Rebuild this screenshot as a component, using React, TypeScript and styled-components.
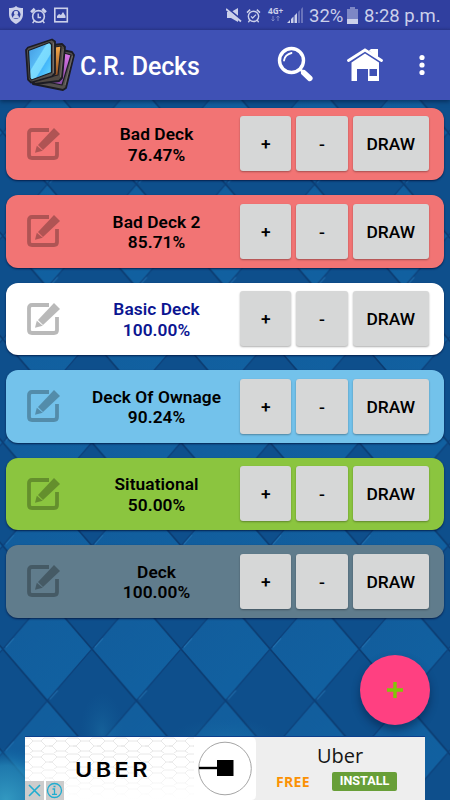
import React from "react";
import styled, { createGlobalStyle } from "styled-components";

const GlobalStyle = createGlobalStyle`
  * { box-sizing: border-box; }
  html, body, #root { margin: 0; width: 450px; height: 800px; overflow: hidden; }
  body { font-family: Roboto, "Liberation Sans", sans-serif; background: #0f5796; }
  button { font-family: inherit; border: 0; padding: 0; margin: 0; }
  svg { display: block; flex: none; }
`;

const Screen = styled.div`
  position: relative;
  width: 450px;
  height: 800px;
  overflow: hidden;
  display: flex;
  flex-direction: column;
`;

const Backdrop = styled.svg`
  position: absolute;
  inset: 0;
  z-index: -1;
`;

const StatusBar = styled.header`
  height: 30px;
  flex: none;
  background: linear-gradient(#303f9f 27px, #2b388f);
  color: #cbd0ea;
  display: flex;
  align-items: center;
  padding: 0 10px 0 8px;
`;

const StatusGroup = styled.div<{ $gap: number }>`
  display: flex;
  align-items: center;
  gap: ${(p) => p.$gap}px;
`;

const StatusText = styled.span<{ $width: number }>`
  width: ${(p) => p.$width}px;
  font-size: 18.5px;
  line-height: 30px;
  padding-top: 1px;
  white-space: nowrap;
`;

const Spacer = styled.div`
  flex: 1;
`;

const AppBar = styled.nav`
  height: 70px;
  flex: none;
  background: #3f51b5;
  display: flex;
  align-items: center;
  padding-left: 24px;
  box-shadow: 0 2px 4px rgba(0, 20, 50, 0.5);
`;

const Title = styled.h1`
  margin: 3px 0 0 3px;
  width: 197px;
  color: #fff;
  font-size: 25px;
  font-weight: 500;
  letter-spacing: -0.1px;
  line-height: 34px;
  white-space: nowrap;
`;

const IconButton = styled.button<{ $left?: number }>`
  background: transparent;
  margin-left: ${(p) => p.$left ?? 0}px;
`;

const DeckList = styled.main`
  display: flex;
  flex-direction: column;
  gap: 15px;
  padding: 7.5px 6.5px 0 6px;
`;

const DeckCard = styled.article<{ $color: string; $ink: string }>`
  height: 72.5px;
  border-radius: 12px;
  background: ${(p) => p.$color};
  color: ${(p) => p.$ink};
  box-shadow: 0 1px 2px rgba(0, 15, 55, 0.75);
  display: flex;
  align-items: center;
  padding: 0 14.5px 0 20px;
`;

const DeckInfo = styled.div`
  flex: 1;
  text-align: center;
  font-size: 17.3px;
  font-weight: 600;
  line-height: 20.5px;
  letter-spacing: 0.08px;
  padding: 2px 0 0 11px;
  white-space: nowrap;
`;

const Actions = styled.div`
  display: flex;
  gap: 5px;
`;

const ActionButton = styled.button<{ $wide?: boolean }>`
  width: ${(p) => (p.$wide ? 76.5 : 51.2)}px;
  height: 55px;
  border-radius: 3px;
  background: #d6d7d7;
  box-shadow: 0 1px 2px rgba(0, 0, 0, 0.32);
  color: #000;
  font-size: 17.4px;
  font-weight: 500;
  line-height: 55px;
  padding-top: 1px;
`;

const Fab = styled.button`
  position: absolute;
  left: 360px;
  top: 655px;
  width: 70px;
  height: 70px;
  border-radius: 50%;
  background: #ff4081;
  display: grid;
  place-items: center;
  box-shadow: 0 5px 9px rgba(0, 20, 50, 0.45);
`;

const AdBanner = styled.aside`
  width: 400px;
  height: 63px;
  margin: auto auto 0 25px;
  position: relative;
  flex: none;
  display: flex;
  overflow: hidden;
  background: #fff;
  box-shadow: 0 -1px 0 #0b3f8d;
`;

const AdArt = styled.div`
  position: relative;
  width: 232px;
  background: #fff;
  flex: none;
`;

const AdPattern = styled.svg`
  position: absolute;
  inset: 0;
`;

const Brand = styled.span`
  position: absolute;
  left: 50px;
  top: 21px;
  font-family: Inter, sans-serif;
  font-size: 19.5px;
  line-height: 24px;
  font-weight: 600;
  letter-spacing: 2.9px;
  transform: scaleX(1.2);
  transform-origin: left;
  color: #000;
`;

const AdControls = styled.div`
  position: absolute;
  left: 0;
  bottom: 0;
  display: flex;
  gap: 2px;
  background: #fff;
`;

const AdControl = styled.button`
  width: 18.5px;
  height: 19px;
  background: #ccc;
  display: grid;
  place-items: center;
`;

const AdCopy = styled.div`
  flex: 1;
  background: #eee;
  font-family: "Open Sans", sans-serif;
  display: flex;
  flex-direction: column;
`;

const AdTitle = styled.div`
  font-size: 20px;
  line-height: 26px;
  color: #151515;
  padding: 6px 0 0 60px;
`;

const AdFooter = styled.div`
  display: flex;
  align-items: center;
  padding: 3px 0 0 19px;
`;

const FreeLabel = styled.span`
  width: 56px;
  color: #fb9104;
  font-size: 14px;
  letter-spacing: 0.3px;
  line-height: 18px;
  font-weight: 700;
`;

const InstallButton = styled.button`
  width: 65px;
  height: 19px;
  border-radius: 2px;
  background: #689f38;
  color: #fff;
  font: 700 12.6px/17px Roboto, sans-serif;
  padding-bottom: 2px;
`;

function DiamondBackdrop() {
  return (
    <Backdrop width="450" height="800" viewBox="0 0 450 800">
      <defs>
        <linearGradient id="lightTile" x1="0" y1="0" x2="1" y2="1">
          <stop offset="0" stopColor="#125c9b" />
          <stop offset="1" stopColor="#1162a2" />
        </linearGradient>
        <pattern id="diamonds" width="89.1" height="103.3" patternUnits="userSpaceOnUse" patternTransform="translate(2.8 597.4)">
          <rect width="89.1" height="103.3" fill="#0e4f8c" />
          <path d="M44.55 0 89.1 51.65 44.55 103.3 0 51.65Z" fill="url(#lightTile)" />
          <path d="M44.55 0 89.1 51.65M0 51.65 44.55 103.3" stroke="#0b3b70" strokeWidth="1.7" />
          <path d="M44.55 0 0 51.65M44.55 103.3 89.1 51.65" stroke="#0c407a" strokeWidth="1.2" />
          <path d="M3 50 11 41M47 102 55 93" stroke="#2577b5" strokeWidth="1" opacity=".75" />
        </pattern>
        <radialGradient id="cornerGlow">
          <stop offset="0" stopColor="#39a6ca" stopOpacity=".85" />
          <stop offset=".65" stopColor="#268bbb" stopOpacity=".7" />
          <stop offset="1" stopColor="#116ba6" stopOpacity="0" />
        </radialGradient>
        <radialGradient id="softGlow">
          <stop offset="0" stopColor="#2584b4" stopOpacity=".32" />
          <stop offset="1" stopColor="#1469a1" stopOpacity="0" />
        </radialGradient>
      </defs>
      <rect width="450" height="800" fill="url(#diamonds)" />
      <ellipse cx="6" cy="800" rx="52" ry="53" fill="url(#cornerGlow)" />
      <ellipse cx="102" cy="732" rx="22" ry="40" fill="url(#softGlow)" />
      <ellipse cx="225" cy="742" rx="58" ry="24" fill="url(#softGlow)" />
    </Backdrop>
  );
}

function AlarmIcon({ width = 17, check = false }: { width?: number; check?: boolean }) {
  return (
    <svg width={width} height={width} viewBox="0 0 18 18" fill="none" stroke="currentColor">
      <circle cx="9" cy="10" r="6.2" strokeWidth="1.7" />
      <path d="M1.2 5.5 5 2M16.8 5.5 13 2" strokeWidth={check ? 1.8 : 3} />
      <path d={check ? "m6 10 2 2 4-4" : "M8.7 7v4.2h3"} strokeWidth="1.5" />
      <path d="m4.8 14.3-2 2.8M13.2 14.3l2 2.8" strokeWidth="1.6" />
    </svg>
  );
}

function StatusIconsLeft() {
  return (
    <StatusGroup $gap={6}>
      <svg width="16" height="18" viewBox="0 0 16 18">
        <path d="M8 0C6 2 3 2 1 2v6c0 5 3 8 7 10 4-2 7-5 7-10V2c-2 0-5 0-7-2Z" fill="currentColor" />
        <circle cx="8" cy="8.6" r="4.5" fill="#303f9f" />
        <circle cx="8" cy="6.9" r="2.2" fill="currentColor" />
        <path d="M5 12.2c0-2.6 1.2-3.4 3-3.4s3 .8 3 3.4Z" fill="currentColor" />
      </svg>
      <AlarmIcon />
      <svg width="16" height="16" viewBox="0 0 16 16">
        <rect x="1.8" y="1.3" width="12.5" height="13.5" fill="none" stroke="currentColor" strokeWidth="1.6" />
        <path d="M4 11V9l2-2 2 1 2-3 2.5 4v2Z" fill="currentColor" />
      </svg>
    </StatusGroup>
  );
}

const NetworkIcon = styled.svg`
  overflow: visible;
`;

function StatusIconsRight() {
  return (
    <StatusGroup $gap={4}>
      <svg width="16" height="16" viewBox="0 0 16 16" fill="currentColor">
        <path d="M1 5h4l7-4v14l-7-4H1Z" />
        <path d="m0 0 15 12.5" stroke="#303f9f" strokeWidth="1.8" />
        <path d="m0 2 15 12.5" stroke="currentColor" strokeWidth="1.8" />
      </svg>
      <AlarmIcon width={15} check />
      <NetworkIcon width="18" height="18" viewBox="0 0 18 18">
        <text x="3" y="8" fill="currentColor" fontFamily="Open Sans, sans-serif" fontSize="8.2" fontWeight="700">4G+</text>
        <path d="M8 15v-5M6.5 13.5 8 15l1.5-1.5M13 15v-5m-1.5 1.5L13 10l1.5 1.5" fill="none" stroke="#7d87c5" />
      </NetworkIcon>
      <svg width="17" height="17" viewBox="0 0 17 17">
        <path d="M0 16 3 13v3ZM4 12l2.5-2.5V16H4ZM7.5 8.5 10 6v10H7.5Z" fill="currentColor" />
        <path d="m11 5 2-2v13h-2ZM14 2l2-2v16h-2Z" fill="#6973bb" />
      </svg>
    </StatusGroup>
  );
}

const StatusClockRow = styled.div`
  display: flex;
  align-items: center;
  margin-left: 5px;
`;

const BatteryIcon = styled.svg`
  margin: 0 6px 0 3px;
`;

function CardsLogo() {
  return (
    <svg width="53" height="54" viewBox="0 0 53 54">
      <defs>
        <linearGradient id="blueCard" x2="1" y2="1">
          <stop stopColor="#4197df" /><stop offset=".4" stopColor="#56b8f4" />
          <stop offset=".43" stopColor="#7cdcff" /><stop offset=".62" stopColor="#78d9fd" />
          <stop offset=".65" stopColor="#43b6fa" /><stop offset="1" stopColor="#6bdfff" />
        </linearGradient>
        <linearGradient id="orangeCard" x2="0" y2="1"><stop stopColor="#f5aa4b" /><stop offset="1" stopColor="#8d4c22" /></linearGradient>
        <linearGradient id="violetCard" x2="0" y2="1"><stop stopColor="#dc77e8" /><stop offset="1" stopColor="#8349a3" /></linearGradient>
      </defs>
      <g stroke="#1c1c23" strokeWidth="1.8" strokeLinejoin="round">
        <path d="m38 12 10 2 2 3-8 33-3 2-30-6-2-4Z" fill="#54504f" />
        <path d="m40 15 7 2-9 30-15-3 15-6Z" fill="url(#violetCard)" strokeWidth="1.2" />
        <path d="m29 7 9-1 3 3-3 31-3 3-24 3-3-3Z" fill="#504943" />
        <path d="m31 9 6-1-3 29-9 2 5-3Z" fill="url(#orangeCard)" strokeWidth="1.2" />
        <path d="M4 9.5 28 1.5l3 2v32l-3 3-21 6-3-3L2 12Z" fill="#57534f" />
        <path d="m4.5 12.5 21-8 2 2v28L7.5 42l-1.5-2Z" fill="url(#blueCard)" strokeWidth="1.2" />
      </g>
      <path d="M29.5 5v30M39.3 11 36.5 39M48.5 18 41 47" stroke="#817a74" strokeWidth=".7" />
    </svg>
  );
}

function SearchIcon() {
  return (
    <svg width="38" height="38" viewBox="0 0 38 38" fill="none" stroke="#fff" strokeLinecap="round">
      <circle cx="14.5" cy="14.5" r="12" strokeWidth="3.4" />
      <path d="M7 14.5q1-6 7.5-7.5" strokeWidth="1.8" />
      <path d="m26.8 26.8 6 5.6" strokeWidth="5.6" />
      <path d="m23 23 3 3" strokeWidth="2.6" />
    </svg>
  );
}

function HomeIcon() {
  return (
    <svg width="36" height="34" viewBox="0 0 36 34">
      <path d="M22 2.5 24 1h7v10Z" fill="#fff" />
      <path d="M18 2 1.5 12.5M18 2l16.5 10.5" stroke="#fff" strokeWidth="2.8" strokeLinecap="round" />
      <path fillRule="evenodd" d="M18 5.5 4.5 14.5V33H10V21h11v12H32V14.5ZM22.5 21h7.5v7h-7.5Z" fill="#fff" />
    </svg>
  );
}

function EditIcon() {
  return (
    <svg width="36" height="34" viewBox="0 0 36 34">
      <g opacity=".27">
        <path d="M23 3H6Q3 3 3 6v22q0 3 3 3h22q3 0 3-3V15" fill="none" stroke="#000" strokeWidth="3.8" />
        <path d="m28 1 6 6-17 16-5-5Z" fill="#000" />
        <path d="m10.8 18.8 6 5-7.8 2Z" fill="#000" />
      </g>
    </svg>
  );
}

const decks = [
  { name: "Bad Deck", rate: "76.47%", color: "#f27474", ink: "#000" },
  { name: "Bad Deck 2", rate: "85.71%", color: "#f27474", ink: "#000" },
  { name: "Basic Deck", rate: "100.00%", color: "#fff", ink: "#0b1591" },
  { name: "Deck Of Ownage", rate: "90.24%", color: "#73c2eb", ink: "#000" },
  { name: "Situational", rate: "50.00%", color: "#8bc53f", ink: "#000" },
  { name: "Deck", rate: "100.00%", color: "#607c8c", ink: "#000" },
];

function Advertisement() {
  return (
    <AdBanner>
      <AdArt>
        <AdPattern width="232" height="63">
          <defs>
            <pattern id="adLines" width="24" height="16" patternUnits="userSpaceOnUse">
              <path d="M0 9h3l5-5h8l5 5h3M0 9h3l5 5h8l5-5M0 1h5l3 3M24 1h-5l-3 3M8 14l-3 2M16 14l3 2" fill="none" stroke="#e2e2e2" strokeWidth=".8" />
            </pattern>
            <linearGradient id="adFade" x2="0" y2="1">
              <stop offset=".3" stopColor="#fff" stopOpacity="0" /><stop offset="1" stopColor="#fff" />
            </linearGradient>
          </defs>
          <rect width="169" height="63" fill="url(#adLines)" />
          <rect width="169" height="63" fill="url(#adFade)" />
          <path d="M226 0h6v63h-6q5 0 5-5V6q0-6-5-6Z" fill="#eee" />
          <circle cx="200" cy="31.5" r="26.3" fill="#fff" stroke="#a5a5a5" />
          <path d="M174 31h20" stroke="#000" strokeWidth="2.4" />
          <path d="M192 23h16.5v16H192Z" />
        </AdPattern>
        <Brand>UBER</Brand>
        <AdControls>
          <AdControl><svg width="13" height="13" viewBox="0 0 13 13"><path d="m1 1 11 11M12 1 1 12" stroke="#20add0" strokeWidth="1.6" /></svg></AdControl>
          <AdControl>
            <svg width="17" height="17" viewBox="0 0 17 17" fill="none" stroke="#20add0" strokeWidth="1.3">
              <circle cx="8.5" cy="8.5" r="7" /><path d="M6.5 7h2v5M6 12.3h5M7.5 4.5h2" />
            </svg>
          </AdControl>
        </AdControls>
      </AdArt>
      <AdCopy>
        <AdTitle>Uber</AdTitle>
        <AdFooter><FreeLabel>FREE</FreeLabel><InstallButton>INSTALL</InstallButton></AdFooter>
      </AdCopy>
    </AdBanner>
  );
}

export default function App() {
  return (
    <Screen>
      <GlobalStyle />
      <DiamondBackdrop />
      <StatusBar>
        <StatusIconsLeft />
        <Spacer />
        <StatusIconsRight />
        <StatusClockRow>
          <StatusText $width={35}>32%</StatusText>
          <BatteryIcon width="11" height="17" viewBox="0 0 11 17">
            <path d="M3 0h5v2h3v15H0V2h3Z" fill="#7d87c5" />
            <path d="M0 12h11v5H0Z" fill="currentColor" />
          </BatteryIcon>
          <StatusText $width={76}>8:28 p.m.</StatusText>
        </StatusClockRow>
      </StatusBar>
      <AppBar>
        <CardsLogo />
        <Title>C.R. Decks</Title>
        <IconButton aria-label="Search"><SearchIcon /></IconButton>
        <IconButton $left={32} aria-label="Home"><HomeIcon /></IconButton>
        <IconButton $left={36} aria-label="More">
          <svg width="6" height="22" viewBox="0 0 6 22" fill="#fff"><circle cx="3" cy="3.5" r="2.6" /><circle cx="3" cy="11" r="2.6" /><circle cx="3" cy="18.5" r="2.6" /></svg>
        </IconButton>
      </AppBar>
      <DeckList>
        {decks.map((deck) => (
          <DeckCard key={deck.name} $color={deck.color} $ink={deck.ink}>
            <EditIcon />
            <DeckInfo><div>{deck.name}</div><div>{deck.rate}</div></DeckInfo>
            <Actions>
              <ActionButton>+</ActionButton><ActionButton>-</ActionButton><ActionButton $wide>DRAW</ActionButton>
            </Actions>
          </DeckCard>
        ))}
      </DeckList>
      <Fab aria-label="Add deck">
        <svg width="16" height="16" viewBox="0 0 16 16"><path d="M8 0v16M0 8h16" stroke="#80c707" strokeWidth="3.4" /></svg>
      </Fab>
      <Advertisement />
    </Screen>
  );
}
